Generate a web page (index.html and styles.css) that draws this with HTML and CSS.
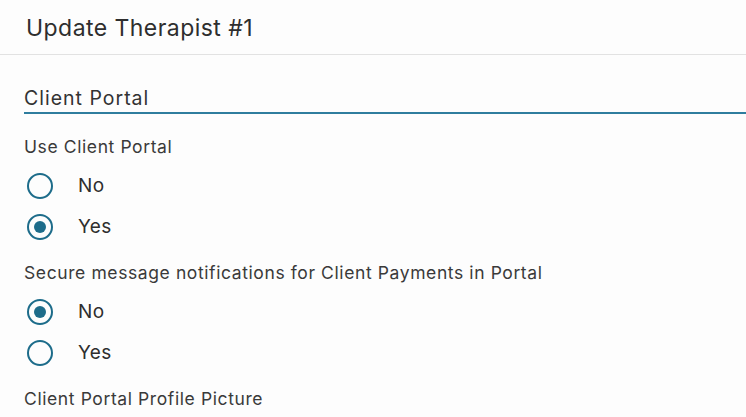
FILE: index.html
```html
<!DOCTYPE html>
<html>
<head>
<meta charset="utf-8">
<link rel="stylesheet" href="styles.css">
</head>
<body>
<div class="dialog">
  <header class="head"><h1 class="title">Update Therapist #1</h1></header>
  <div class="body">
    <h2 class="section">Client Portal</h2>
    <div class="field first">
      <div class="label">Use Client Portal</div>
      <label class="radio"><span class="dot"></span><span class="rtext">No</span></label>
      <label class="radio"><span class="dot on"></span><span class="rtext">Yes</span></label>
    </div>
    <div class="field">
      <div class="label">Secure message notifications for Client Payments in Portal</div>
      <label class="radio"><span class="dot on"></span><span class="rtext">No</span></label>
      <label class="radio"><span class="dot"></span><span class="rtext">Yes</span></label>
    </div>
    <div class="field">
      <div class="label">Client Portal Profile Picture</div>
    </div>
  </div>
</div>
</body>
</html>
```
FILE: styles.css
```css
html, body { margin: 0; padding: 0; }
body {
  background: #fdfdfd;
  font-family: "Inter", "Noto Sans", sans-serif;
  color: #333;
  width: 746px;
  height: 417px;
  overflow: hidden;
}
.head {
  height: 55px;
  border-bottom: 1px solid #e2e2e2;
  box-sizing: border-box;
  padding: 14px 0 0 26px;
}
.title {
  margin: 0;
  font-size: 23px;
  letter-spacing: 0.45px;
  font-weight: 400;
  line-height: 28px;
  color: #2e2e2e;
}
.body {
  padding: 31px 0 0 24px;
}
.section {
  margin: 0;
  font-size: 19.5px;
  letter-spacing: 1px;
  font-weight: 400;
  line-height: 25px;
  color: #333;
  padding-bottom: 1px;
  border-bottom: 2px solid #2f7d9e;
}
.field { margin-top: 14px; }
.field.first { margin-top: 21px; }
.label {
  font-size: 17.5px;
  letter-spacing: 0.6px;
  line-height: 24px;
  color: #3a3a3a;
  margin-bottom: 6px;
}
.radio {
  display: flex;
  align-items: center;
  height: 41px;
}
.dot {
  width: 26px;
  height: 26px;
  box-sizing: border-box;
  border: 2.5px solid #1d6c8a;
  border-radius: 50%;
  margin-left: 3px;
  display: flex;
  align-items: center;
  justify-content: center;
}
.dot.on::after {
  content: "";
  width: 12px;
  height: 12px;
  border-radius: 50%;
  background: #1d6c8a;
}
.rtext {
  margin-left: 25px;
  font-size: 19px;
  letter-spacing: 0.4px;
  color: #2e2e2e;
}
```
